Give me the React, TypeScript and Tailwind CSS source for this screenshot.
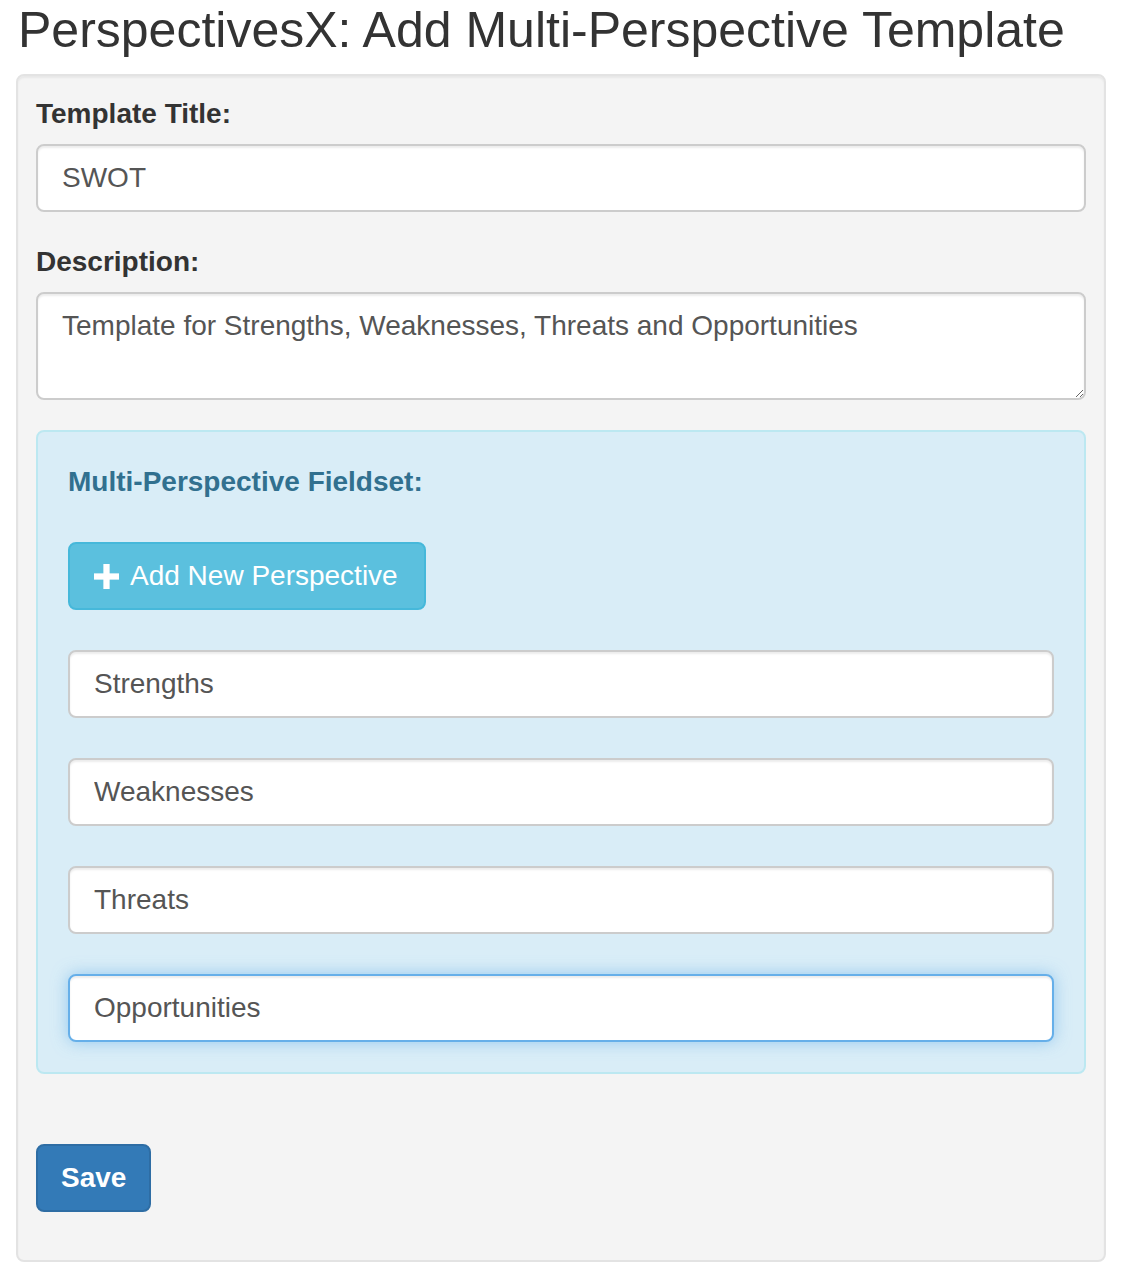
import React from 'react';

const perspectives = ["Strengths", "Weaknesses", "Threats", "Opportunities"];

const inputBase =
  "block w-full h-[68px] px-6 rounded-lg border-2 bg-white text-[28px] text-[#555] outline-none";

const App = () => {
  return (
    <div className="min-h-[1286px] bg-white text-[#333] font-['Liberation_Sans',Arial,sans-serif]">
      <h1 className="px-[18px] text-[50px] leading-[60px] font-normal mb-[14px] whitespace-nowrap">
        PerspectivesX: Add Multi-Perspective Template
      </h1>

      {/* Well */}
      <div className="ml-4 w-[1090px] bg-[#f4f4f4] border-2 border-[#e3e3e3] rounded-lg p-[18px] shadow-[inset_0_2px_2px_rgba(0,0,0,0.05)]">
        <div className="mb-[30px]">
          <label className="block text-[28px] leading-[40px] font-bold mb-[10px]">Template Title:</label>
          <input
            className={`${inputBase} border-[#ccc] shadow-[inset_0_2px_2px_rgba(0,0,0,0.075)]`}
            defaultValue="SWOT"
          />
        </div>

        <div className="mb-[30px]">
          <label className="block text-[28px] leading-[40px] font-bold mb-[10px]">Description:</label>
          <textarea
            className="block w-full h-[108px] px-6 py-3 rounded-lg border-2 border-[#ccc] bg-white text-[28px] leading-[40px] text-[#555] outline-none shadow-[inset_0_2px_2px_rgba(0,0,0,0.075)]"
            defaultValue="Template for Strengths, Weaknesses, Threats and Opportunities"
          />
        </div>

        {/* Fieldset panel */}
        <div className="bg-[#d9edf7] border-2 border-[#bce8f1] rounded-lg p-[30px] mb-[70px]">
          <h4 className="text-[28px] leading-[40px] font-bold text-[#31708f] mb-10">
            Multi-Perspective Fieldset:
          </h4>

          <button className="flex items-center h-[68px] pl-6 pr-[26px] rounded-lg border-2 border-[#46b8da] bg-[#5bc0de] text-white text-[28px] mb-10">
            <svg width="25" height="25" viewBox="0 0 24 24" className="mr-[11px]" fill="white">
              <rect x="9" y="0" width="6" height="24" />
              <rect x="0" y="9" width="24" height="6" />
            </svg>
            <span>Add New Perspective</span>
          </button>

          <div className="flex flex-col gap-10">
            {perspectives.map((p, i) => (
              <input
                key={p}
                defaultValue={p}
                className={
                  i === perspectives.length - 1
                    ? `${inputBase} border-[#66afe9] shadow-[inset_0_2px_2px_rgba(0,0,0,0.075),0_0_16px_rgba(102,175,233,0.6)]`
                    : `${inputBase} border-[#ccc] shadow-[inset_0_2px_2px_rgba(0,0,0,0.075)]`
                }
              />
            ))}
          </div>
        </div>

        <button className="h-[68px] px-[23px] mb-[30px] rounded-lg border-2 border-[#2e6da4] bg-[#337ab7] text-white text-[28px] font-bold">
          Save
        </button>
      </div>
    </div>
  );
};

export default App;
